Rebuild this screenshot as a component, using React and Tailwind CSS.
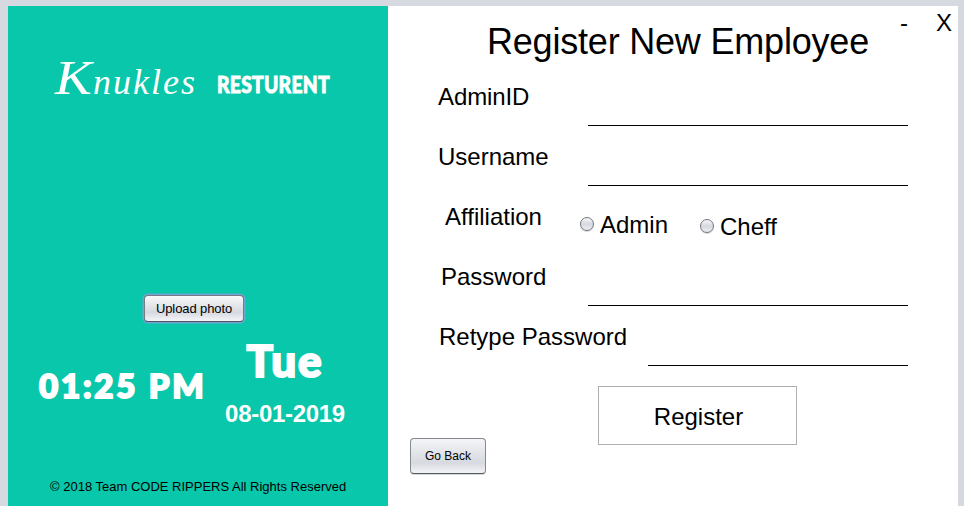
const arial = "font-['Liberation_Sans',Arial,sans-serif]";

function FormRow({ label, inset, lineClass, children }) {
  return (
    <div className="flex h-[60px] justify-between pr-[50px]">
      <label className={`mt-[17px] h-7 text-2xl leading-7 whitespace-nowrap ${inset}`}>{label}</label>
      {lineClass && <input aria-label={label} className={`h-8 self-end border-b border-black outline-none ${lineClass}`} />}
      {children}
    </div>
  );
}

function Radio({ label, className }) {
  return (
    <div className={`flex h-7 items-start text-2xl leading-7 ${className}`}>
      <span className="mt-[6px] size-[14px] rounded-full border border-[#73767c] bg-linear-to-b from-[#f6f7f9] via-[#d6d9df] to-[#eceef3] shadow-[0_1px_0_#d5d7db]" />
      <span className="ml-[6px]">{label}</span>
    </div>
  );
}

function Sidebar() {
  return (
    <aside className="flex h-[500px] w-[380px] shrink-0 flex-col bg-[#08c7aa] text-white">
      <div className="flex h-[289px] items-start pt-[47px]">
        <span className="ml-[47px] flex w-[162px] items-baseline font-['Liberation_Serif',serif] text-[36px] leading-[50px] whitespace-nowrap italic">
          <span className="inline-block w-[38px] origin-left scale-x-[1.15] text-[48px]">K</span>
          <span className="tracking-[2px]">nukles</span>
        </span>
        <span className="mt-[17px] w-[113px] origin-left scale-x-[0.84] font-['Lato',sans-serif] text-[23px] leading-7 font-black tracking-[0.3px] whitespace-nowrap [-webkit-text-stroke:0.9px_white]">
          RESTURENT
        </span>
      </div>
      <button className="ml-[136px] h-[27px] w-[100px] rounded-[4px] border border-[#777b88] border-b-[#50545f] bg-linear-to-b from-[#f8f9fa] via-[#d6d9df] via-65% to-[#f4f5fa] text-[13px] leading-6 tracking-[-0.1px] text-black shadow-[0_0_0_1.5px_#73a4d1]">
        Upload photo
      </button>
      <div className="flex h-[140px] font-['Lato',sans-serif] font-black">
        <span className="mt-[43px] ml-[31px] w-[176px] text-[33px] leading-[40px] tracking-[2.8px] whitespace-nowrap [-webkit-text-stroke:2px_white]">
          01:25 PM
        </span>
        <div className="flex w-[140px] flex-col items-center">
          <span className="mt-[13px] text-[44px] leading-[50px] tracking-[1.9px] [-webkit-text-stroke:2px_white]">Tue</span>
          <span className="mt-[15px] font-['Liberation_Sans',Arial,sans-serif] text-2xl leading-7 font-bold tracking-[-0.3px] whitespace-nowrap">
            08-01-2019
          </span>
        </div>
      </div>
      <p className="mt-[16px] ml-[42px] text-[13px] leading-[18px] whitespace-nowrap text-black">
        © 2018 Team CODE RIPPERS All Rights Reserved
      </p>
    </aside>
  );
}

export default function App() {
  return (
    <div className={`h-[514px] w-[964px] overflow-hidden bg-white text-black ${arial}`}>
      <div className="flex h-[506px] bg-[#d6d9df] pt-[6px] pl-2">
        <Sidebar />
        <main className="flex w-[570px] shrink-0 flex-col bg-white">
          <header className="flex h-[60px] items-start">
            <h1 className="mt-[16px] ml-[99px] w-[413px] text-[36px] leading-10 tracking-[-0.2px] whitespace-nowrap">Register New Employee</h1>
            <button className="mt-[3px] w-[36px] text-left text-2xl leading-7">-</button>
            <button className="mt-[3px] text-2xl leading-7">X</button>
          </header>
          <FormRow label="AdminID" inset="ml-[50px] tracking-[-0.1px]" lineClass="w-[320px]" />
          <FormRow label="Username" inset="ml-[50px]" lineClass="w-[320px]" />
          <FormRow label="Affiliation" inset="ml-[57px]">
            <div className="flex w-[328px]">
              <Radio label="Admin" className="mt-[25px] w-[120px]" />
              <Radio label="Cheff" className="mt-[27px]" />
            </div>
          </FormRow>
          <FormRow label="Password" inset="ml-[53px]" lineClass="w-[320px]" />
          <FormRow label="Retype Password" inset="ml-[51px]" lineClass="w-[260px]" />
          <div className="flex items-start">
            <button className="mt-[72px] ml-[22px] h-9 w-[76px] rounded-[4px] border border-[#85888f] border-b-[#55585f] bg-linear-to-b from-[#f4f5f7] via-[#d6d9df] via-70% to-[#f4f5fb] pt-px text-[12px] leading-[33px] shadow-[0_1px_0_#d5d7db]">
              Go Back
            </button>
            <button className="mt-[20px] ml-[112px] h-[59px] w-[199px] border border-[#afafaf] pt-[2px] pl-[2px] text-2xl leading-7">
              Register
            </button>
          </div>
        </main>
      </div>
    </div>
  );
}
